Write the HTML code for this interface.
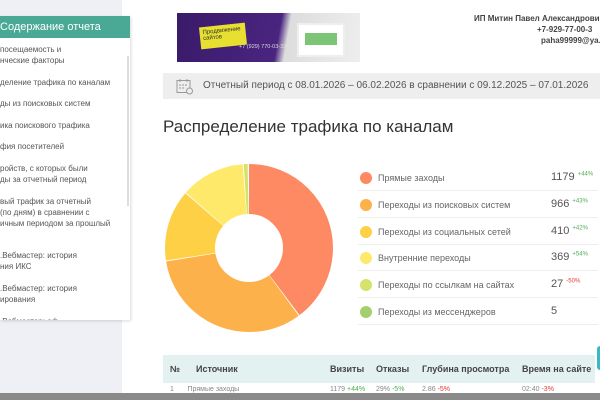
<!DOCTYPE html><html><head><meta charset="utf-8"><style>
*{margin:0;padding:0;box-sizing:border-box}
body{width:600px;height:400px;overflow:hidden;background:#fff;font-family:"Liberation Sans","DejaVu Sans",sans-serif;position:relative;color:#444}
.side{position:absolute;left:0;top:0;width:122px;height:400px;background:#eef0f5}
.panel{position:absolute;left:0;top:16px;width:130px;height:304px;background:#fff;box-shadow:1px 1px 3px rgba(0,0,0,.15);overflow:hidden}
.ph{background:#4aa995;color:#fff;font-size:11px;height:22px;line-height:22px;padding-left:0}
.it{font-size:8px;color:#555;line-height:11px;position:absolute;left:0;white-space:nowrap}
.sb{position:absolute;left:127px;top:40px;width:2px;height:150px;background:#ddd}
.abs{position:absolute}
.per{position:absolute;left:163px;top:73px;width:437px;height:26px;background:#eeeeee;font-size:10px;color:#555;line-height:26px;padding-left:40px;white-space:nowrap;overflow:hidden}
h1{position:absolute;left:163px;top:117px;font-size:17px;font-weight:normal;color:#333}
.lg{position:absolute;left:358px;width:240px;height:27px;border-bottom:1px solid #eee;font-size:9px;color:#666}
.lg .d{position:absolute;left:2px;top:8px;width:12px;height:12px;border-radius:50%}
.lg .t{position:absolute;left:20px;top:9px}
.lg .v{position:absolute;left:193px;top:7px;font-size:11px;color:#555}
.lg sup{font-size:6px;color:#4caf50}
.lg sup.r{color:#e53935}
.th{position:absolute;left:163px;top:355px;width:432px;height:28px;background:#e3f1f0;font-size:9px;font-weight:bold;color:#444}
.th span{position:absolute;top:9px}
</style></head><body>
<div class="side"></div>
<div class="panel">
<div class="ph">Содержание отчета</div>
<div class="it" style="top:28px">посещаемость и<br>нческие факторы</div>
<div class="it" style="top:61px">деление трафика по каналам</div>
<div class="it" style="top:82px">ды из поисковых систем</div>
<div class="it" style="top:104px">ика поискового трафика</div>
<div class="it" style="top:125px">фия посетителей</div>
<div class="it" style="top:147px">ройств, с которых были<br>ды за отчетный период</div>
<div class="it" style="top:180px">вый трафик за отчетный<br>(по дням) в сравнении с<br>ичным периодом за прошлый</div>
<div class="it" style="top:234px">.Вебмастер: история<br>ния ИКС</div>
<div class="it" style="top:267px">.Вебмастер: история<br>ирования</div>
<div class="it" style="top:300px">.Вебмастер: оф...</div>
<div class="sb"></div>
</div>
<div class="abs" style="left:177px;top:13px;width:183px;height:49px;background:linear-gradient(100deg,#3a1a6a 0%,#4a2580 55%,#ddd 60%,#eee 100%)">
<div class="abs" style="left:23px;top:12px;width:46px;height:22px;background:#e8e030;transform:rotate(-6deg);font-size:6px;color:#333;padding:3px">Продвижение сайтов</div>
<div class="abs" style="left:62px;top:31px;font-size:5.5px;color:#ddd">+7 (929) 770-03-33</div>
<div class="abs" style="left:120px;top:10px;width:48px;height:34px;background:#fff;border:2px solid #eee"><div style="margin:8px 6px;height:12px;background:#7cc576"></div></div>
</div>
<div class="abs" style="left:474px;top:13px;font-size:8px;font-weight:bold;color:#444;line-height:11px;white-space:nowrap">ИП Митин Павел Александрови</div>
<div class="abs" style="left:537px;top:24px;font-size:8px;font-weight:bold;color:#444;line-height:11px;white-space:nowrap">+7-929-77-00-3</div>
<div class="abs" style="left:541px;top:35px;font-size:8px;font-weight:bold;color:#444;line-height:11px;white-space:nowrap">paha99999@ya.</div>
<div class="per">Отчетный период с 08.01.2026 – 06.02.2026 в сравнении с 09.12.2025 – 07.01.2026</div>
<svg class="abs" style="left:176px;top:78px" width="18" height="17" viewBox="0 0 18 17" fill="none" stroke="#999" stroke-width="1"><rect x="1" y="2.5" width="13" height="12"/><path d="M4 1v3M11 1v3M3 7h2M6 7h2M9 7h2M3 10h2M6 10h2"/><circle cx="13.5" cy="13" r="3" fill="#eee"/></svg>
<h1>Распределение трафика по каналам</h1>
<svg class="abs" style="left:164px;top:163px" width="170" height="170" viewBox="0 0 170 170">
<g transform="rotate(-90 85 85)" fill="none" stroke-width="50">
<circle cx="85" cy="85" r="59" stroke="#fd8a62" stroke-dasharray="147.2 370.7" stroke-dashoffset="0"/>
<circle cx="85" cy="85" r="59" stroke="#fdb14a" stroke-dasharray="120.5 370.7" stroke-dashoffset="-147.9"/>
<circle cx="85" cy="85" r="59" stroke="#fed045" stroke-dasharray="50.7 370.7" stroke-dashoffset="-269.1"/>
<circle cx="85" cy="85" r="59" stroke="#fee96a" stroke-dasharray="45.6 370.7" stroke-dashoffset="-320.5"/>
<circle cx="85" cy="85" r="59" stroke="#d5e36c" stroke-dasharray="2.8 370.7" stroke-dashoffset="-366.8"/>
</g>
</svg>
<div class="lg" style="top:164px"><div class="d" style="background:#fd8a62"></div><div class="t">Прямые заходы</div><div class="v">1179 <sup>+44%</sup></div></div>
<div class="lg" style="top:191px"><div class="d" style="background:#fdb14a"></div><div class="t">Переходы из поисковых систем</div><div class="v">966 <sup>+43%</sup></div></div>
<div class="lg" style="top:218px"><div class="d" style="background:#fed045"></div><div class="t">Переходы из социальных сетей</div><div class="v">410 <sup>+42%</sup></div></div>
<div class="lg" style="top:244px"><div class="d" style="background:#fee96a"></div><div class="t">Внутренние переходы</div><div class="v">369 <sup>+54%</sup></div></div>
<div class="lg" style="top:271px"><div class="d" style="background:#d5e36c"></div><div class="t">Переходы по ссылкам на сайтах</div><div class="v">27 <sup class="r">-50%</sup></div></div>
<div class="lg" style="top:298px"><div class="d" style="background:#a5cf6f"></div><div class="t">Переходы из мессенджеров</div><div class="v">5</div></div>
<div class="th"><span style="left:7px">№</span><span style="left:33px">Источник</span><span style="left:167px">Визиты</span><span style="left:213px">Отказы</span><span style="left:259px">Глубина просмотра</span><span style="left:359px">Время на сайте</span></div>
<div class="abs" style="left:170px;top:386px;font-size:7px;color:#888;white-space:nowrap">1&nbsp;&nbsp;&nbsp;&nbsp;&nbsp;&nbsp;&nbsp;Прямые заходы<span style="position:absolute;left:160px">1179 <span style="color:#4caf50">+44%</span></span><span style="position:absolute;left:206px">29% <span style="color:#4caf50">-5%</span></span><span style="position:absolute;left:252px">2.86 <span style="color:#e53935">-5%</span></span><span style="position:absolute;left:352px">02:40 <span style="color:#e53935">-3%</span></span></div>
<div class="abs" style="left:597px;top:346px;width:6px;height:24px;background:#3bb8c0;border-radius:3px"></div>
<div class="abs" style="left:0;top:393px;width:600px;height:7px;background:#8a8a8a"></div>
</body></html>
